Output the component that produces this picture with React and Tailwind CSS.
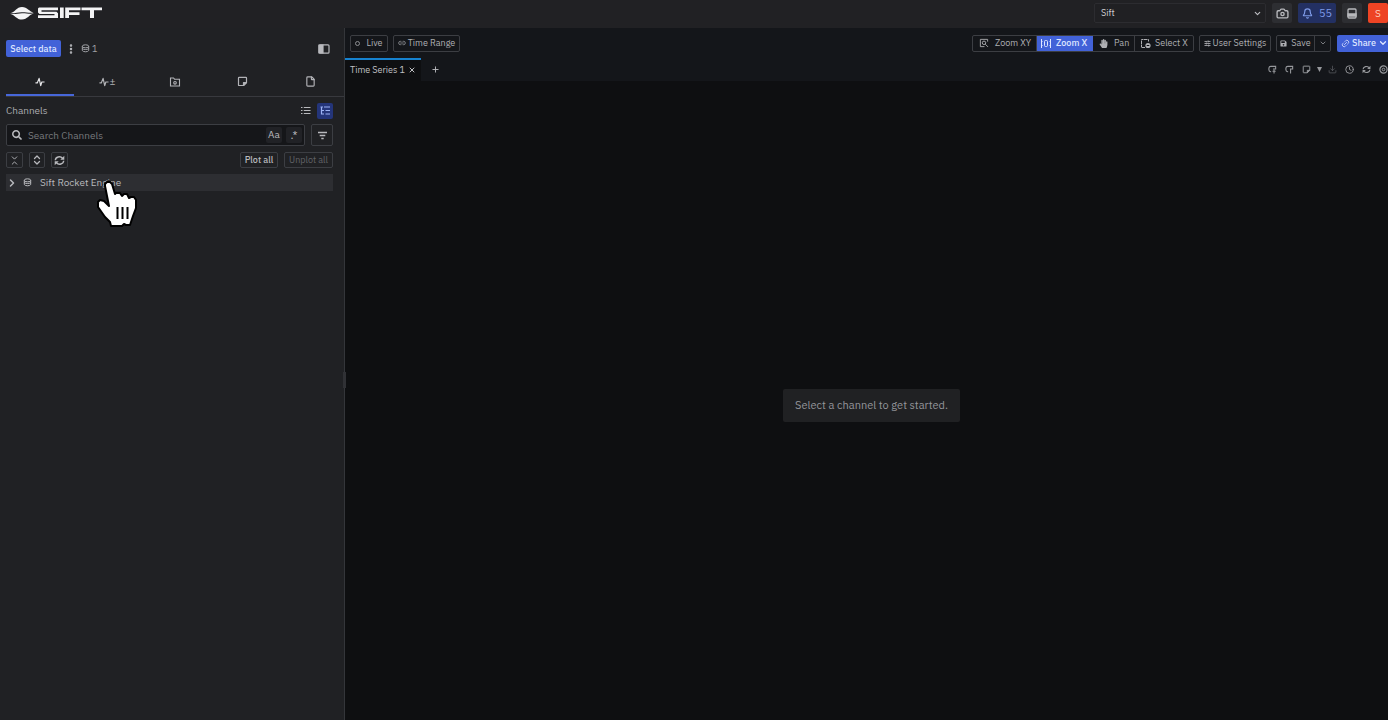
import React from "react";
import {
  Bell, Camera, ChevronDown, ChevronRight, ChevronsDownUp, ChevronsUpDown, Clock,
  Download, File, MoreVertical, SlidersHorizontal, X, Plus, Link2,
} from "lucide-react";
import { FaHandPaper, FaSave, FaSearch } from "react-icons/fa";

function Logo() {
  return (
    <svg width="92" height="14" viewBox="0 0 92 14" fill="#f4f4f5" role="img" aria-label="Sift">
      <path d="M0 7.200C5 6.500 6.500 1 12 1c5.500 0 7 4.500 11.500 5.700C19 7.300 15.500 6 11.500 6.200 7.500 6.400 5 7.500 0 7.200Z" />
      <path d="M.5 7.900C5.500 8.400 8 7.300 12 7.200S19 8 24 7.500C19 8.500 17.500 13.500 12 13.500 6.500 13.500 5 9 .5 7.900Z" />
      <path d="M29 1.500H48V4.200H31.500V5.700H46.500L48 7.200V12H28V9.300H44.500V8H29.500L28 6.500V2.500Z" />
      <path d="M50 1.500h3.700V12H50zM55.200 1.500H70.500V4.200H59V6.200H69.500V8.900H59V12H55.200ZM71.500 1.500H92V4.200H84V12H80V4.200H71.500Z" />
    </svg>
  );
}

function StackIcon() {
  return (
    <svg width="9" height="9" viewBox="0 0 9 9" fill="none" stroke="currentColor" strokeWidth="1">
      <ellipse cx="4.500" cy="2.300" rx="3.200" ry="1.500" />
      <path d="M1.300 2.300v4.200M7.700 2.300v4.200M1.300 4.400c.6 1.500 5.800 1.500 6.400 0M1.300 6.500c.6 1.700 5.800 1.700 6.400 0" />
    </svg>
  );
}

function PanelIcon() {
  return (
    <svg width="12" height="12" viewBox="0 0 12 12" fill="none" stroke="currentColor" strokeWidth="1.200">
      <rect x="1" y="1.800" width="10" height="8.400" rx="1" />
      <path d="M1 2h4v8H1z" fill="currentColor" />
    </svg>
  );
}

function PulseIcon() {
  return (
    <svg width="10" height="10" viewBox="0 0 11 11" fill="none" stroke="currentColor" strokeWidth="1.300" strokeLinejoin="round">
      <path d="M.5 6.500H2.500L4.500 1.500 6.300 9.500 7.500 5.500H10.500" />
    </svg>
  );
}

function CameraFolderIcon() {
  return (
    <svg width="12" height="12" viewBox="0 0 12 12" fill="none" stroke="currentColor" strokeWidth="1.100">
      <path d="M1.500 10V2H4.500L5.500 3.200H10.500V10Z" />
      <circle cx="6" cy="6.800" r="1.300" />
    </svg>
  );
}

function NoteIcon({ size }) {
  return (
    <svg width={size} height={size} viewBox="0 0 11 11" fill="none" stroke="currentColor" strokeWidth="1.200" strokeLinejoin="round">
      <path d="M1.500 2a.6.600 0 0 1 .6-.6h6.800a.6.600 0 0 1 .6.600V6.500L6.500 9.500H2.100a.6.600 0 0 1-.6-.6Z" />
      <path d="M9.500 6.500h-3v3Z" fill="currentColor" />
    </svg>
  );
}

function ListIcon() {
  return (
    <svg width="11" height="11" viewBox="0 0 11 11" stroke="currentColor" strokeWidth="1.200">
      <path d="M1 2.500h1.500M1 5.500h1.500M1 8.500h1.500M3.800 2.500H10.500M3.800 5.500H10.500M3.800 8.500H10.500" />
    </svg>
  );
}

function TreeIcon() {
  return (
    <svg width="11" height="11" viewBox="0 0 11 11" fill="none" stroke="currentColor" strokeWidth="1.200">
      <path d="M.5 2H3M1.500 2v7H4M1.500 5.500H4M4 2h6M5.500 5.500h4.500M5.500 9h4.500" />
    </svg>
  );
}

function FilterIcon() {
  return (
    <svg width="11" height="11" viewBox="0 0 11 11" stroke="currentColor" strokeWidth="1.300">
      <path d="M1 2.500h9M2.700 5.500h5.600M4.300 8.500h2.400" />
    </svg>
  );
}

function SyncIcon({ size }) {
  return (
    <svg width={size} height={size} viewBox="0 0 11 11" fill="none" stroke="currentColor" strokeWidth="1.400">
      <path d="M1.300 5.200A4 3.600 0 0 1 8.500 3.300M9.700 5.800A4 3.600 0 0 1 2.500 7.700" />
      <path d="M10.300.8V4.800H6.300ZM.7 10.200V6.200H4.700Z" fill="currentColor" stroke="none" />
    </svg>
  );
}

function GearIcon() {
  return (
    <svg width="9" height="9" viewBox="0 0 9 9" fill="none" stroke="currentColor">
      <circle cx="4.500" cy="4.500" r="3.600" strokeWidth="1.200" />
      <circle cx="4.500" cy="4.500" r="1.300" />
    </svg>
  );
}

function ZoomBoxIcon() {
  return (
    <svg width="10" height="10" viewBox="0 0 11 11" fill="none" stroke="currentColor">
      <path d="M9.500 4V1.500h-8v8H6" />
      <circle cx="5.500" cy="5.300" r="1.900" />
      <path d="m6.900 6.800 3 3" />
    </svg>
  );
}

function ZoomXIcon() {
  return (
    <svg width="10" height="11" viewBox="0 0 10 11" fill="none" stroke="currentColor">
      <path d="M.5 1v9M9.500 1v9M.5 3.500h1M.5 7.500h1M8.500 3.500h1M8.500 7.500h1" />
      <rect x="3.500" y="2.500" width="3" height="6" rx="1" />
    </svg>
  );
}

function SelectXIcon() {
  return (
    <svg width="11" height="11" viewBox="0 0 11 11" fill="none" stroke="currentColor">
      <path d="M5 9.500H1.500V1.500h7V4" strokeDasharray="3 .5" />
      <circle cx="8" cy="7.500" r="2.600" fill="currentColor" stroke="none" />
      <path d="M6.700 7.500h2.600" stroke="#101215" />
    </svg>
  );
}

function StepIcon({ flip }) {
  return (
    <svg width="9" height="9" viewBox="0 0 10 10" fill="none" stroke="currentColor" strokeWidth="1.200">
      <path d="M3.500 7.500H3A2.200 2.200 0 0 1 1 5.300V3.500A2.200 2.200 0 0 1 3.200 1.500H8.500V4.500H5.500" />
      {flip ? <path d="M6.200 4.500v5" /> : <path d="M5 7h3.500M6.700 5v4.500" />}
    </svg>
  );
}

function ConsoleIcon() {
  return (
    <svg width="10" height="11" viewBox="0 0 10 11" fill="none" stroke="currentColor" strokeWidth="1.300">
      <rect x="1" y="1" width="8" height="9" rx="1" />
      <path d="M1 6h8v2H1z" fill="currentColor" />
    </svg>
  );
}

function HandCursor() {
  return (
    <svg className="pointer-events-none absolute left-[96px] top-[181px] z-10" width="44" height="48" viewBox="0 0 44 48">
      <path
        d="M9 5V3L11 1H14L16 3 19 13 20 12H24L26 15 28 13H31L33 17 35 16H38L40 19V27L37 35 34 44H30L28 43L26 45H15L14 41 9 36 2 26V21L4 19 8 20 13 25Z"
        fill="#fff" stroke="#000" strokeWidth="2" strokeLinejoin="round"
      />
      <path d="M21.500 26v12M26.500 26v12M31.500 26v12" stroke="#000" strokeWidth="2" />
    </svg>
  );
}

const outline = "flex items-center justify-center rounded-xs border border-[#3c3e43]";
const tool = "flex h-full items-center border-r border-[#3c3e43]";
const stripButton = "flex w-[17px] items-center justify-center";

function Header() {
  return (
    <header className="flex h-7 shrink-0 items-center justify-between overflow-hidden bg-[#212124] pb-0.5 pl-2.5">
      <a href="#home" className="block"><Logo /></a>
      <div className="flex h-5 items-center">
        <div className="relative mr-1.5 h-5 w-[172px]">
          <select aria-label="Workspace" className="block h-full w-full appearance-none rounded-xs border border-[#2c2c30] bg-[#202023] px-1.5 text-[9px] text-[#cfcfd2]">
            <option>Sift</option>
          </select>
          <ChevronDown size={9} strokeWidth={3} className="pointer-events-none absolute right-1 top-1.5 text-[#bfc0c4]" />
        </div>
        <button aria-label="Capture" className="mr-1.5 flex h-5 w-5 items-center justify-center rounded-xs bg-[#2d2e32]"><Camera size={13} strokeWidth={2.500} /></button>
        <button aria-label="Notifications" className="mr-1.5 flex h-5 w-[38px] items-center justify-center gap-1.5 rounded-xs bg-[#233062] text-[11px] text-[#7f9be8]">
          <Bell size={11} strokeWidth={2.500} />55
        </button>
        <button aria-label="Console" className="mr-1.5 flex h-5 w-5 items-center justify-center rounded-xs bg-[#2d2e32]"><ConsoleIcon /></button>
        <button className="h-5 w-5 rounded-xs bg-[#ee4424] text-[10px] text-[#ffd0c0]">S</button>
      </div>
    </header>
  );
}

function Sidebar() {
  const tabs = [
    ["Channels", <PulseIcon />],
    ["Calculated channels", <><PulseIcon /><span className="text-[10px]">±</span></>],
    ["Saved views", <CameraFolderIcon />],
    ["Annotations", <NoteIcon size={11} />],
    ["Files", <File size={11} strokeWidth={2.500} />],
  ];
  return (
    <aside className="relative flex w-[345px] shrink-0 flex-col border-r border-[#34363a] bg-[#202124] pl-1.5">
      <div className="flex h-[41px] items-center pr-3.5">
        <button className="h-[17px] w-[55px] rounded-xs bg-[#4262d8] text-[9px] font-medium text-[#dfe6ff]">Select data</button>
        <button aria-label="More" className="ml-1 flex h-4 w-3 items-center justify-center"><MoreVertical size={12} strokeWidth={3} /></button>
        <span className="ml-1 flex items-center gap-0.5 text-[9px] text-[#a0a2a6]"><StackIcon />1</span>
        <button aria-label="Toggle panel" className="ml-auto"><PanelIcon /></button>
      </div>
      <nav className="flex h-7 border-b border-[#38393e]">
        {tabs.map(([label, icon], i) => (
          <button
            key={label}
            aria-label={label}
            className={i === 0
              ? "flex flex-1 items-center justify-center border-b-2 border-[#4767d9] text-[#e6e6e8]"
              : "flex flex-1 items-center justify-center border-b-2 border-transparent text-[#b2b3b7]"}
          >
            {icon}
          </button>
        ))}
      </nav>
      <div className="flex flex-col pr-[11px]">
        <div className="flex h-[27px] items-center">
          <h2 className="text-[10px] text-[#aaabaf]">Channels</h2>
          <button aria-label="List view" className="ml-auto flex h-4 w-4 items-center justify-center"><ListIcon /></button>
          <button aria-label="Tree view" className="ml-1 flex h-4 w-4 items-center justify-center rounded-xs bg-[#24357a] text-[#9cb2f5]"><TreeIcon /></button>
        </div>
        <div className="flex h-[22px] gap-1.5">
          <div className="flex min-w-0 flex-1 items-center rounded-xs border border-[#3c3e43] bg-[#151619] pl-[5px] pr-0.5">
            <FaSearch size={10} className="shrink-0" />
            <input aria-label="Search Channels" placeholder="Search Channels" className="ml-1.5 min-w-0 flex-1 bg-transparent text-[10px] outline-none placeholder:text-[#77797d]" />
            <button aria-label="Match case" className="h-4 w-4 rounded-xs bg-[#212226] text-[10px] leading-4">Aa</button>
            <button aria-label="Use pattern" className="ml-1 h-4 w-4 rounded-xs bg-[#212226] text-[11px] leading-4">.*</button>
          </div>
          <button aria-label="Filter" className={`${outline} w-[22px]`}><FilterIcon /></button>
        </div>
        <div className="mt-1.5 flex h-4 gap-1.5">
          <button aria-label="Collapse all" className={`${outline} w-[17px]`}><ChevronsDownUp size={11} /></button>
          <button aria-label="Expand all" className={`${outline} w-4`}><ChevronsUpDown size={12} strokeWidth={2.500} /></button>
          <button aria-label="Refresh" className={`${outline} w-[17px]`}><SyncIcon size={11} /></button>
          <button className={`${outline} ml-auto w-[38px] text-[9px] font-medium text-[#b8b9bd]`}>Plot all</button>
          <button className={`${outline} w-[49px] text-[9px] text-[#606267]`}>Unplot all</button>
        </div>
        <div className="mt-1.5 flex h-[17px] items-center bg-[#2d2e32] text-[10px] text-[#b8b9bd]">
          <button aria-label="Expand Sift Rocket Engine"><ChevronRight size={12} strokeWidth={3} /></button>
          <span className="ml-[5px] mr-2"><StackIcon /></span>
          <span>Sift Rocket Engine</span>
        </div>
      </div>
      <div className="absolute -right-0.5 top-[344px] h-4 w-[3px] bg-[#303135]" />
    </aside>
  );
}

function Toolbar() {
  return (
    <div className="flex h-[30px] items-center bg-[#14161a] pl-[5px] text-[9px] text-[#aeafb3]">
      <button className={`${outline} h-[17px] w-[38px] gap-1.5`}><span className="h-[5px] w-[5px] rounded-full border border-[#8b8d91]" />Live</button>
      <button className={`${outline} ml-[5px] h-[17px] w-[67px] gap-0.5`}><Link2 size={8} />Time Range</button>
      <div className="ml-auto flex h-[17px] overflow-hidden rounded-xs border border-[#3c3e43]">
        <button className={`${tool} w-16 gap-1.5 pl-1.5`}><ZoomBoxIcon />Zoom XY</button>
        <button className="flex h-full w-14 items-center gap-[5px] bg-[#4262d8] pl-1 font-medium text-[#dfe6ff]"><ZoomXIcon />Zoom X</button>
        <button className={`${tool} w-[42px] gap-1.5 pl-1.5`}><FaHandPaper size={9} />Pan</button>
        <button className="flex h-full w-[58px] items-center gap-1 pl-[5px]"><SelectXIcon />Select X</button>
      </div>
      <button className={`${outline} ml-[5px] h-[17px] w-[72px] gap-0.5`}><SlidersHorizontal size={7} strokeWidth={3} />User Settings</button>
      <div className="ml-[5px] flex h-[17px] rounded-xs border border-[#3c3e43]">
        <button className={`${tool} w-[38px] justify-center gap-1`}><FaSave size={7} />Save</button>
        <button aria-label="Save options" className="flex w-[15px] items-center justify-center"><ChevronDown size={8} /></button>
      </div>
      <button className="ml-1.5 flex h-[17px] w-[51px] items-center justify-end gap-0.5 rounded-l-xs bg-[#4262d8] font-medium text-[#dfe6ff]">
        <Link2 size={9} className="-rotate-45" />Share<ChevronDown size={10} strokeWidth={3} />
      </button>
    </div>
  );
}

function TabStrip() {
  return (
    <div className="flex h-[23px] justify-between bg-[#14161a]">
      <div className="flex">
        <div className="flex w-[76px] items-center justify-between border-t-2 border-[#1682cf] bg-[#0e0f11] pb-0.5 pl-[5px] pr-[5px] text-[9px] text-[#c0c1c4]">
          <span>Time Series 1</span>
          <button aria-label="Close tab"><X size={8} strokeWidth={3} /></button>
        </div>
        <button aria-label="Add tab" className="px-2.5"><Plus size={9} strokeWidth={2.500} /></button>
      </div>
      <div className="-mr-1 flex text-[#96989c]">
        <button aria-label="Step back" className={stripButton}><StepIcon /></button>
        <button aria-label="Step forward" className={stripButton}><StepIcon flip /></button>
        <button aria-label="Note" className={stripButton}><NoteIcon size={9} /></button>
        <button aria-label="Note options" className="flex w-[9px] items-center justify-center">
          <svg width="5" height="5" viewBox="0 0 5 5" fill="currentColor"><path d="M0 0h5L2.500 5Z" /></svg>
        </button>
        <button aria-label="Download" className="flex w-[17px] items-center justify-center text-[#595c61]"><Download size={9} /></button>
        <button aria-label="History" className={stripButton}><Clock size={9} strokeWidth={2.500} /></button>
        <button aria-label="Reload" className={stripButton}><SyncIcon size={9} /></button>
        <button aria-label="Panel settings" className={stripButton}><GearIcon /></button>
      </div>
    </div>
  );
}

export default function App() {
  return (
    <div className="relative flex h-screen flex-col overflow-hidden bg-[#0e0f11] font-['IBM_Plex_Sans','Inter',sans-serif] text-[#b8b9bd]">
      <Header />
      <div className="flex min-h-0 flex-1">
        <Sidebar />
        <main className="flex min-w-0 flex-1 flex-col overflow-hidden">
          <Toolbar />
          <TabStrip />
          <div className="flex flex-1 items-center justify-center pl-2.5 pt-2.5">
            <p className="rounded-xs bg-[#202123] px-3 py-2 text-[11px] leading-[17px] text-[#94959a]">Select a channel to get started.</p>
          </div>
        </main>
      </div>
      <HandCursor />
    </div>
  );
}
